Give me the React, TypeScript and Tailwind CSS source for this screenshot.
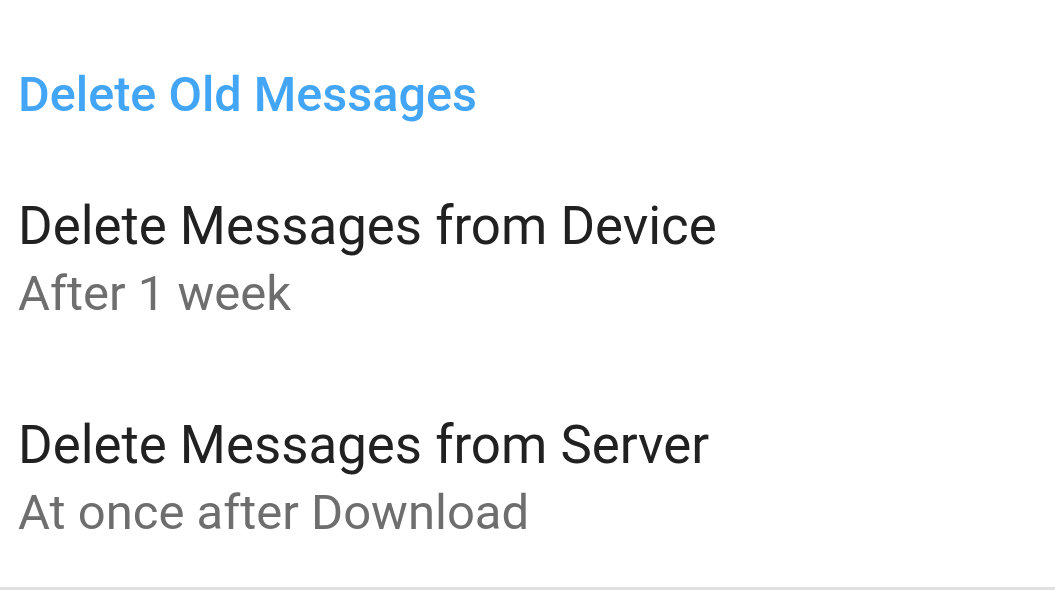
import React from 'react';

const settings = [
  { title: 'Delete Messages from Device', value: 'After 1 week' },
  { title: 'Delete Messages from Server', value: 'At once after Download' },
];

const SettingRow = ({ title, value }: { title: string; value: string }) => (
  <div className="px-[18px] py-[46px]">
    <div className="text-[52.8px] leading-[62px] text-[#212121]">{title}</div>
    <div className="mt-[9px] text-[49px] leading-[56px] text-[#6e6e6e]">{value}</div>
  </div>
);

export default function App() {
  return (
    <div className="w-[1055px] h-[597px] bg-white overflow-hidden" style={{ fontFamily: 'Roboto, "Noto Sans", sans-serif' }}>
      <div className="px-[18px] pt-[67px] pb-[26px]">
        <h2 className="text-[48.6px] leading-[56px] font-medium text-[#42a5f5]">Delete Old Messages</h2>
      </div>
      {settings.map((s) => (
        <SettingRow key={s.title} title={s.title} value={s.value} />
      ))}
      <div className="h-[3px] bg-[#e0e0e0]" />
    </div>
  );
}
